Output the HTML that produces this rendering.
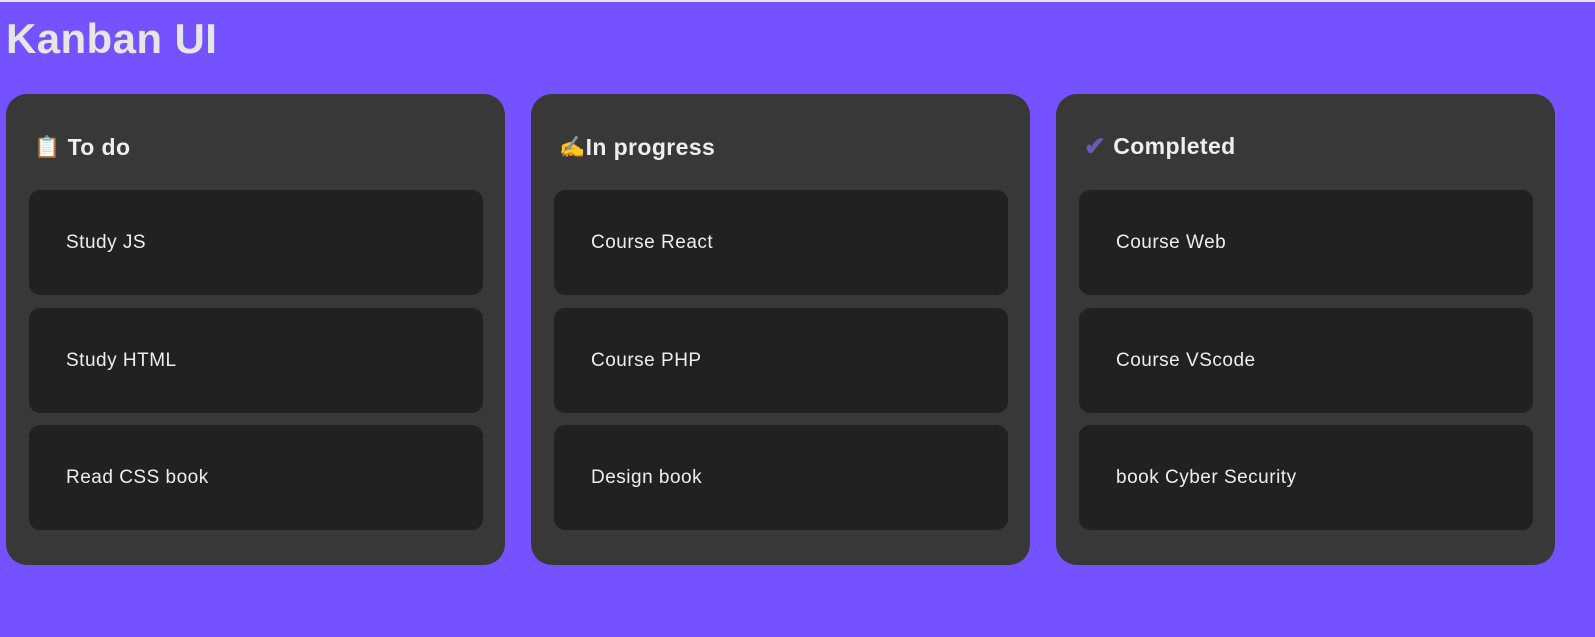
<!DOCTYPE html>
<html><head><style>
html,body{margin:0;padding:0;}
body{width:1595px;height:637px;background:#7452ff;border-top:2px solid #e4e4e4;box-sizing:border-box;font-family:"Liberation Sans",sans-serif;position:relative;overflow:hidden;}
h1{position:absolute;left:6px;top:13px;margin:0;font-size:42px;font-weight:bold;color:#e6e6e6;letter-spacing:0.4px;}
.col{position:absolute;top:92px;width:499px;height:471px;background:#383838;border-radius:21px;}
.hd{position:absolute;left:28px;top:40px;font-size:23px;font-weight:bold;color:#eee;display:flex;align-items:center;gap:7px;letter-spacing:0.4px;}
.it{position:absolute;left:23px;width:454px;height:105px;background:#212121;border-radius:11px;color:#eee;font-size:19px;line-height:105px;padding-left:37px;box-sizing:border-box;letter-spacing:0.5px;}
</style></head><body>
<h1>Kanban UI</h1>
<div class="col" style="left:6px">
<div class="hd"><span style="font-size:21px">📋</span> To do</div>
<div class="it" style="top:96px">Study JS</div>
<div class="it" style="top:214px">Study HTML</div>
<div class="it" style="top:331px">Read CSS book</div>
</div>
<div class="col" style="left:531px">
<div class="hd" style="gap:0"><span style="font-size:21px">✍️</span>In progress</div>
<div class="it" style="top:96px">Course React</div>
<div class="it" style="top:214px">Course PHP</div>
<div class="it" style="top:331px">Design book</div>
</div>
<div class="col" style="left:1056px">
<div class="hd" style="top:37px"><span style="color:#6a5ab0;font-size:26px">✔</span> Completed</div>
<div class="it" style="top:96px">Course Web</div>
<div class="it" style="top:214px">Course VScode</div>
<div class="it" style="top:331px">book Cyber Security</div>
</div>
</body></html>
